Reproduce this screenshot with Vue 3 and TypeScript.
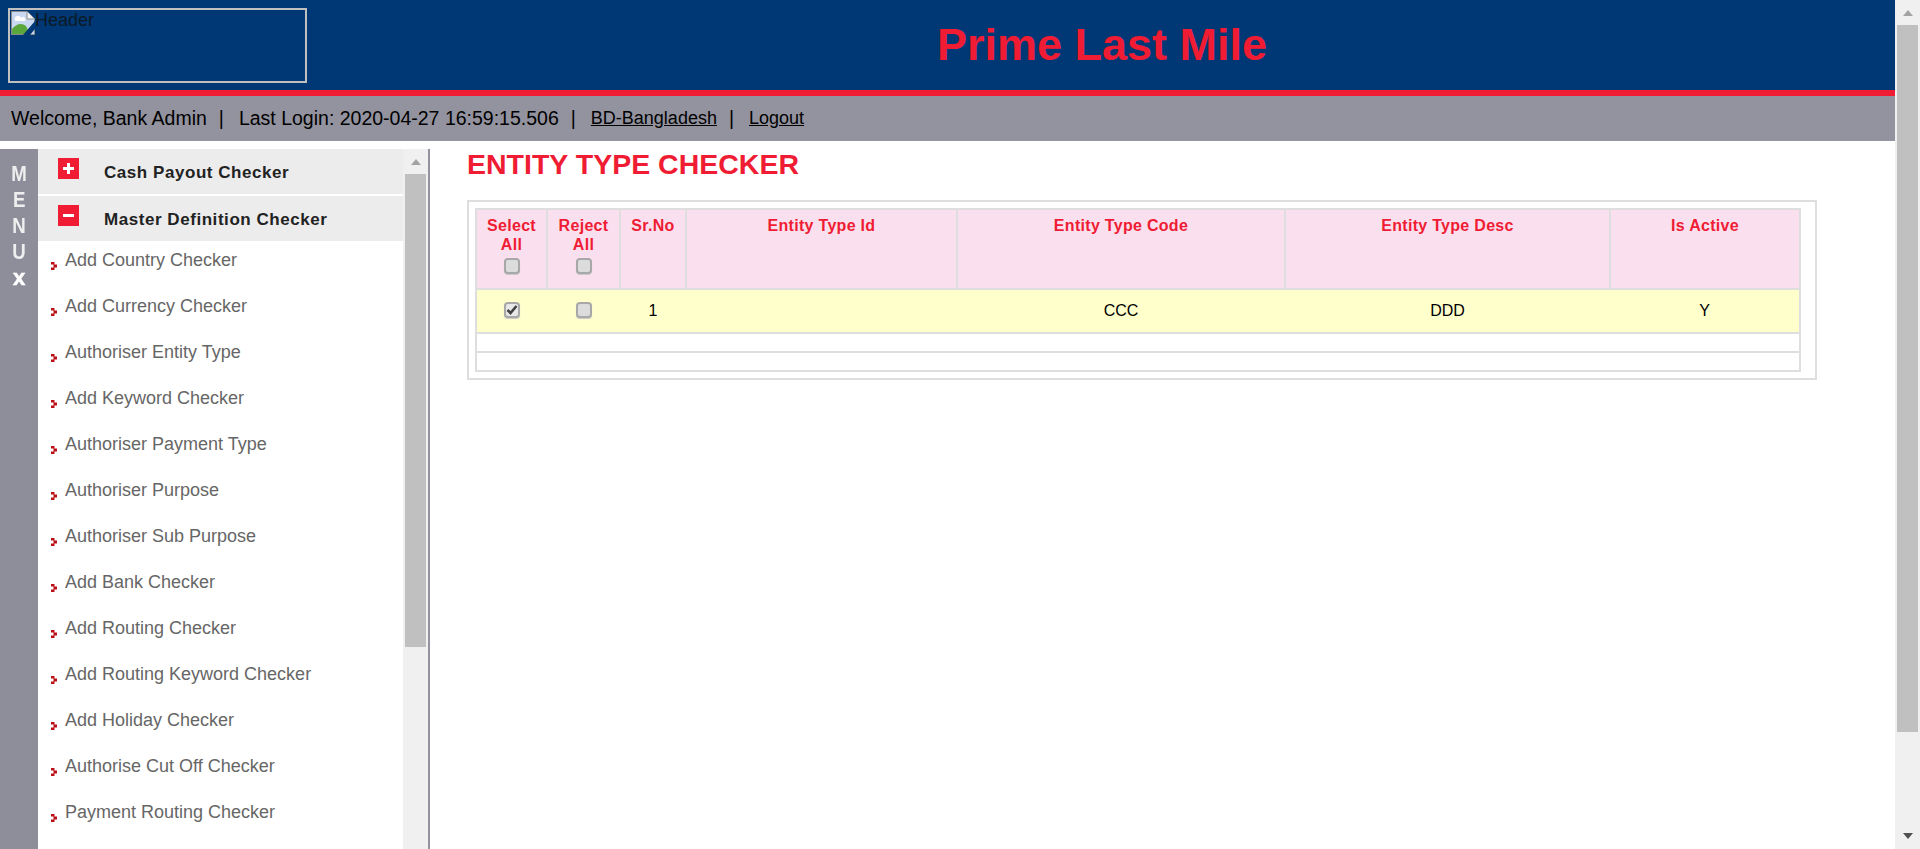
<script setup lang="ts">
const menuLetters: string[] = ['M', 'E', 'N', 'U', 'x']

const checkerLinks: string[] = [
  'Add Country Checker',
  'Add Currency Checker',
  'Authoriser Entity Type',
  'Add Keyword Checker',
  'Authoriser Payment Type',
  'Authoriser Purpose',
  'Authoriser Sub Purpose',
  'Add Bank Checker',
  'Add Routing Checker',
  'Add Routing Keyword Checker',
  'Add Holiday Checker',
  'Authorise Cut Off Checker',
  'Payment Routing Checker',
]

const columns: string[] = ['Entity Type Id', 'Entity Type Code', 'Entity Type Desc', 'Is Active']
</script>

<template>
  <div class="page">
    <div class="page-main">
      <header class="banner">
        <div class="logo-box">
          <svg class="broken-img" width="24" height="24" viewBox="0 0 24 24">
            <path d="M0.5 0.5H16L23.500 8V23.500H0.500Z" fill="#c9d9f2" stroke="#8c8c8c" />
            <path d="M16 0.5V8H23.5" fill="#f4f4f4" stroke="#8c8c8c" />
            <path d="M1 23V18C6 12 11 12 15 15L19 23Z" fill="#5aa83c" />
            <path d="M4 9a3 3 0 0 1 6-2a2.500 2.500 0 0 1 4 3H4Z" fill="#fff" />
            <path d="M24 10L12 24H19L24 18Z" fill="#003876" />
          </svg>
          <span class="logo-alt">Header</span>
        </div>
        <h1 class="app-title">Prime Last Mile</h1>
      </header>
      <div class="userbar">
        <span>Welcome, Bank Admin</span>
        <span class="sep">|</span>
        <span>Last Login: 2020-04-27 16:59:15.506</span>
        <span class="sep">|</span>
        <a href="#">BD-Bangladesh</a>
        <span class="sep">|</span>
        <a href="#">Logout</a>
      </div>

      <div class="body-row">
        <aside class="sidebar">
          <div class="menu-strip">
            <span v-for="l in menuLetters" :key="l" class="menu-letter">{{ l }}</span>
          </div>
          <nav class="menu-list">
            <div class="group-head">
              <span class="toggle"><i class="bar"></i><i class="bar upright"></i></span>
              <span class="group-name">Cash Payout Checker</span>
            </div>
            <div class="group-head">
              <span class="toggle"><i class="bar"></i></span>
              <span class="group-name">Master Definition Checker</span>
            </div>
            <ul class="links">
              <li v-for="item in checkerLinks" :key="item">
                <svg class="bullet" width="6" height="8" viewBox="0 0 6 8">
                  <path d="M0 0H3.500V2.500H6V5.500H3.500V8H0V5.500H2.500V2.500H0Z" fill="#bb1019" />
                </svg>
                <span>{{ item }}</span>
              </li>
            </ul>
          </nav>
          <div class="scroll side-scroll">
            <div class="arrow-up"></div>
            <div class="thumb side-thumb"></div>
          </div>
        </aside>

        <main class="content">
          <h2 class="page-title">ENTITY TYPE CHECKER</h2>
          <div class="table-box">
            <table class="grid">
              <colgroup>
                <col style="width: 71px" />
                <col style="width: 73px" />
                <col style="width: 66px" />
                <col style="width: 271px" />
                <col style="width: 328px" />
                <col style="width: 325px" />
                <col style="width: 190px" />
              </colgroup>
              <thead>
                <tr>
                  <th>Select<br />All<br /><input type="checkbox" class="cb" /></th>
                  <th>Reject<br />All<br /><input type="checkbox" class="cb" /></th>
                  <th>Sr.No</th>
                  <th v-for="c in columns" :key="c">{{ c }}</th>
                </tr>
              </thead>
              <tbody>
                <tr class="row-on">
                  <td>
                    <span class="cb-wrap">
                      <input type="checkbox" class="cb" checked />
                      <svg class="tick" width="12" height="11" viewBox="0 0 12 11">
                        <path d="M1.500 6L4.500 9L10.500 2" fill="none" stroke="#404040" stroke-width="2.600" />
                      </svg>
                    </span>
                  </td>
                  <td><input type="checkbox" class="cb" /></td>
                  <td>1</td>
                  <td></td>
                  <td>CCC</td>
                  <td>DDD</td>
                  <td>Y</td>
                </tr>
                <tr class="row-empty"><td colspan="7"></td></tr>
                <tr class="row-empty"><td colspan="7"></td></tr>
              </tbody>
            </table>
          </div>
        </main>
      </div>
    </div>

    <div class="scroll page-scroll">
      <div class="arrow-up"></div>
      <div class="thumb page-thumb"></div>
      <div class="track-fill"></div>
      <div class="arrow-down"></div>
    </div>
  </div>
</template>

<style>
html,
body {
  margin: 0;
  overflow: hidden;
}
</style>

<style scoped>
.page {
  display: flex;
  height: 849px;
  overflow: hidden;
  font-family: "Liberation Sans", Arial, sans-serif;
  background: #fff;
}
.page-main {
  flex: 1;
  min-width: 0;
  display: flex;
  flex-direction: column;
}

.banner {
  height: 82px;
  flex: none;
  background: #003876;
  border-bottom: 6px solid #ef1c34;
  display: flex;
  padding: 8px 0 0 8px;
}
.logo-box {
  width: 294px;
  height: 70px;
  border: 2px solid #c0c0c0;
  display: flex;
  align-items: flex-start;
  padding: 1px 0 0 1px;
  font-size: 18px;
  line-height: 21px;
  color: #0c1a24;
}
.broken-img {
  flex: none;
}
.logo-alt {
  margin-top: -1px;
}
.app-title {
  margin: 0 0 0 630px;
  padding-top: 12px;
  font-size: 45px;
  line-height: 50px;
  font-weight: bold;
  color: #ef1c34;
}

.userbar {
  height: 45px;
  flex: none;
  background: #93939f;
  padding-left: 11px;
  display: flex;
  align-items: center;
  font-size: 19.5px;
  color: #000;
  white-space: pre;
}
.userbar a {
  color: #000;
  font-size: 18px;
}
.sep {
  margin: 0 15px 0 12px;
}

.body-row {
  flex: 1;
  min-height: 0;
  display: flex;
  padding-top: 8px;
}
.sidebar {
  width: 428px;
  flex: none;
  display: flex;
  border-right: 2px solid #93939f;
  overflow: hidden;
}
.menu-strip {
  width: 38px;
  flex: none;
  background: #8e8e9b;
  display: flex;
  flex-direction: column;
  align-items: center;
  padding-top: 12px;
  box-sizing: border-box;
}
.menu-letter {
  font-weight: bold;
  font-size: 22px;
  line-height: 26px;
  height: 26px;
  color: #eeeeee;
  transform: scaleX(0.85);
  filter: blur(0.4px);
}
.menu-letter:last-child {
  color: #fff;
  -webkit-text-stroke: 0.6px #fff;
  transform: none;
}
.menu-list {
  flex: 1;
  min-width: 0;
}
.group-head {
  height: 45px;
  margin-bottom: 2px;
  background: #ececec;
  display: flex;
  align-items: center;
  font-size: 17px;
  font-weight: bold;
  color: #222;
  letter-spacing: 0.55px;
}
.group-head:nth-child(2) {
  margin-bottom: 0;
}
.group-name {
  padding-top: 2px;
}
.toggle {
  position: relative;
  width: 21px;
  height: 21px;
  background: #ef1c34;
  margin: -6px 25px 0 20px;
  flex: none;
}
.bar {
  position: absolute;
  left: 5px;
  top: 9px;
  width: 11px;
  height: 3px;
  background: #fff;
}
.bar.upright {
  left: 9px;
  top: 5px;
  width: 3px;
  height: 11px;
}
.links {
  list-style: none;
  margin: 0;
  padding: 0;
}
.links li {
  height: 46px;
  padding-left: 13px;
  display: flex;
  align-items: flex-start;
  font-size: 18px;
  line-height: 21px;
  color: #666;
}
.links li span {
  margin-top: 9px;
}
.bullet {
  flex: none;
  margin: 21px 8px 0 0;
}

.scroll {
  flex: none;
  background: #f0f0f0;
  box-sizing: border-box;
}
.side-scroll {
  width: 25px;
  padding: 0 2px;
}
.page-scroll {
  width: 25px;
  padding: 0 2px;
  display: flex;
  flex-direction: column;
}
.thumb {
  background: #c0c0c0;
}
.side-thumb {
  height: 473px;
}
.page-thumb {
  height: 707px;
}
.track-fill {
  flex: 1;
}
.arrow-up,
.arrow-down {
  width: 0;
  height: 0;
  margin: 0 auto;
  border-left: 5.500px solid transparent;
  border-right: 5.500px solid transparent;
}
.arrow-up {
  border-bottom: 6px solid #a3a3a3;
  margin-top: 10px;
  margin-bottom: 9px;
}
.arrow-down {
  border-top: 6px solid #505050;
  margin-bottom: 10px;
}

.content {
  flex: 1;
  min-width: 0;
  padding: 0 0 0 37px;
}
.page-title {
  margin: -1px 0 0;
  font-size: 28.500px;
  line-height: 32px;
  font-weight: bold;
  color: #ef1c34;
}
.table-box {
  width: 1334px;
  margin-top: 20px;
  border: 2px solid #dedede;
  padding: 6px;
}
.grid {
  width: 1324px;
  border-collapse: collapse;
  table-layout: fixed;
  border: 2px solid #dedede;
  font-size: 16px;
}
.grid th,
.grid td {
  border: 2px solid #dedede;
  text-align: center;
  padding: 0;
}
.grid th {
  background: #fae0ee;
  color: #ef1c34;
  font-weight: bold;
  vertical-align: top;
  height: 80px;
  padding-top: 6px;
  box-sizing: border-box;
  line-height: 19px;
  letter-spacing: 0.3px;
}
.grid .row-on td {
  background: #ffffcc;
  height: 42px;
  color: #000;
  border-left: none;
  border-right: none;
}
.row-empty td {
  height: 17px;
}
.cb {
  appearance: none;
  box-sizing: border-box;
  margin: 0;
  width: 16px;
  height: 16px;
  vertical-align: middle;
  background: #dcdcdc;
  border: 2px solid #a8a8a8;
  border-radius: 4px;
  box-shadow: 0 1px 1px #c8c8c8;
}
th .cb {
  margin-top: 2px;
}
td .cb {
  margin-bottom: 2px;
}
.cb:checked {
  background: #e8e8e8;
}
.cb-wrap {
  position: relative;
  display: inline-block;
  line-height: 0;
}
.tick {
  position: absolute;
  left: 2px;
  top: 2px;
}
</style>
